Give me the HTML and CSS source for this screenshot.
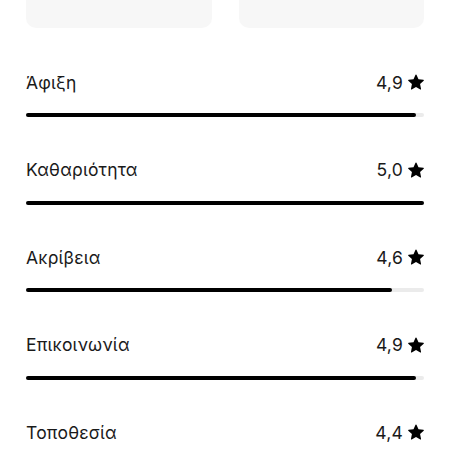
FILE: index.html
```html
<!DOCTYPE html>
<html lang="el">
<head>
    <meta charset="UTF-8">
    <meta name="viewport" content="width=device-width, initial-scale=1.0">
    <title>Αξιολογήσεις</title>
    <link rel="stylesheet" href="styles.css">
</head>
<body>
    <div class="cards">
        <div class="card"></div>
        <div class="card"></div>
    </div>

    <div class="ratings">
        <div class="rating">
            <div class="rating-head">
                <span class="rating-name">Άφιξη</span>
                <span class="rating-score">4,9
                    <svg class="star" viewBox="0 0 32 32"><path d="M15.094 1.579l-4.124 8.885-9.86 1.27a1 1 0 0 0-.542 1.736l7.293 6.565-1.965 9.852a1 1 0 0 0 1.483 1.061L16 25.951l8.625 4.997a1 1 0 0 0 1.482-1.06l-1.965-9.853 7.293-6.565a1 1 0 0 0-.541-1.735l-9.860-1.271-4.127-8.885a1 1 0 0 0-1.814 0z"/></svg>
                </span>
            </div>
            <div class="bar"><div class="bar-fill" style="width: 98%"></div></div>
        </div>
        <div class="rating">
            <div class="rating-head">
                <span class="rating-name">Καθαριότητα</span>
                <span class="rating-score">5,0
                    <svg class="star" viewBox="0 0 32 32"><path d="M15.094 1.579l-4.124 8.885-9.86 1.27a1 1 0 0 0-.542 1.736l7.293 6.565-1.965 9.852a1 1 0 0 0 1.483 1.061L16 25.951l8.625 4.997a1 1 0 0 0 1.482-1.06l-1.965-9.853 7.293-6.565a1 1 0 0 0-.541-1.735l-9.860-1.271-4.127-8.885a1 1 0 0 0-1.814 0z"/></svg>
                </span>
            </div>
            <div class="bar"><div class="bar-fill" style="width: 100%"></div></div>
        </div>
        <div class="rating">
            <div class="rating-head">
                <span class="rating-name">Ακρίβεια</span>
                <span class="rating-score">4,6
                    <svg class="star" viewBox="0 0 32 32"><path d="M15.094 1.579l-4.124 8.885-9.86 1.27a1 1 0 0 0-.542 1.736l7.293 6.565-1.965 9.852a1 1 0 0 0 1.483 1.061L16 25.951l8.625 4.997a1 1 0 0 0 1.482-1.06l-1.965-9.853 7.293-6.565a1 1 0 0 0-.541-1.735l-9.860-1.271-4.127-8.885a1 1 0 0 0-1.814 0z"/></svg>
                </span>
            </div>
            <div class="bar"><div class="bar-fill" style="width: 92%"></div></div>
        </div>
        <div class="rating">
            <div class="rating-head">
                <span class="rating-name">Επικοινωνία</span>
                <span class="rating-score">4,9
                    <svg class="star" viewBox="0 0 32 32"><path d="M15.094 1.579l-4.124 8.885-9.86 1.27a1 1 0 0 0-.542 1.736l7.293 6.565-1.965 9.852a1 1 0 0 0 1.483 1.061L16 25.951l8.625 4.997a1 1 0 0 0 1.482-1.06l-1.965-9.853 7.293-6.565a1 1 0 0 0-.541-1.735l-9.860-1.271-4.127-8.885a1 1 0 0 0-1.814 0z"/></svg>
                </span>
            </div>
            <div class="bar"><div class="bar-fill" style="width: 98%"></div></div>
        </div>
        <div class="rating">
            <div class="rating-head">
                <span class="rating-name">Τοποθεσία</span>
                <span class="rating-score">4,4
                    <svg class="star" viewBox="0 0 32 32"><path d="M15.094 1.579l-4.124 8.885-9.86 1.27a1 1 0 0 0-.542 1.736l7.293 6.565-1.965 9.852a1 1 0 0 0 1.483 1.061L16 25.951l8.625 4.997a1 1 0 0 0 1.482-1.06l-1.965-9.853 7.293-6.565a1 1 0 0 0-.541-1.735l-9.860-1.271-4.127-8.885a1 1 0 0 0-1.814 0z"/></svg>
                </span>
            </div>
            <div class="bar"><div class="bar-fill" style="width: 88%"></div></div>
        </div>
    </div>
</body>
</html>
```

FILE: styles.css
```css
body {
    margin: 0;
    padding: 0 26px;
    font-family: "Inter", "Noto Sans", sans-serif;
    color: #1a1a1a;
    background-color: #fff;
    overflow: hidden;
}
.cards {
    display: grid;
    grid-template-columns: 186px 185px;
    justify-content: space-between;
    margin-top: -60px;
}
.card {
    height: 88px;
    background-color: #f7f7f7;
    border-radius: 10px;
}
.ratings { margin-top: 42px; }
.rating { padding-bottom: 40.5px; }
.rating-head {
    display: flex;
    justify-content: space-between;
    align-items: center;
    height: 24px;
    font-size: 17.5px;
    letter-spacing: 0.2px;
}
.rating-score {
    display: flex;
    align-items: center;
    gap: 5px;
}
.star { width: 16px; height: 16px; fill: #000; }
.bar {
    margin-top: 19px;
    height: 4px;
    background-color: #ebebeb;
    border-radius: 2px;
}
.bar-fill {
    height: 100%;
    background-color: #000;
    border-radius: 2px;
}
```
